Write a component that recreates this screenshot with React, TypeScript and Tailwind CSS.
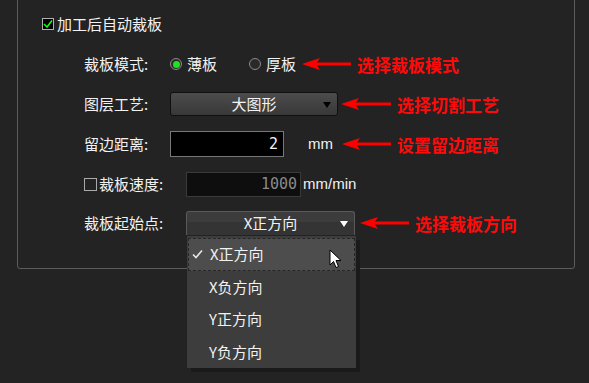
import React from 'react';

const cjk = { fontFamily: '"Microsoft YaHei", "Noto Sans CJK SC", "Liberation Sans", sans-serif' };

function RedArrow({ width = 50 }: { width?: number }) {
  return (
    <svg width={width} height="14" viewBox={`0 0 ${width} 14`} className="shrink-0">
      <polygon points={`0,7 18,1 15,5.5 ${width},5.5 ${width},8.5 15,8.5 18,13`} fill="#ff0000" />
    </svg>
  );
}

function Note({ text, ml, width }: { text: string; ml: string; width?: number }) {
  return (
    <div className={`flex items-center ${ml}`}>
      <RedArrow width={width} />
      <span className="ml-[6px] text-[17px] font-bold text-[#ff0a0a] leading-none" style={cjk}>
        {text}
      </span>
    </div>
  );
}

function Caret({ color }: { color: string }) {
  return (
    <svg className="absolute right-[6px] top-[9px]" width="8" height="6" viewBox="0 0 8 6">
      <polygon points="0,0 8,0 4,6" fill={color} />
    </svg>
  );
}

function Radio({ checked, label }: { checked?: boolean; label: string }) {
  return (
    <div className="flex items-center">
      <span className="w-[12px] h-[12px] rounded-full border border-[#8a8a8a] bg-[#2a2a2a] flex items-center justify-center">
        {checked && <span className="w-[7px] h-[7px] rounded-full bg-[#22e022]" />}
      </span>
      <span className="ml-[5px]">{label}</span>
    </div>
  );
}

const items = ['X正方向', 'X负方向', 'Y正方向', 'Y负方向'];

export default function App() {
  return (
    <div className="w-[589px] h-[383px] bg-[#232323] text-[#f2f2f2] text-[15px] overflow-hidden relative" style={cjk}>
      <div className="ml-[17px] -mt-[10px] w-[558px] h-[279px] border border-[#5c5c5c] rounded-[3px]">
        <div className="pt-[13px]">
          <div className="h-[40px] flex items-center pl-[24px]">
            <span className="w-[12px] h-[12px] border border-[#b0b0b0] bg-black flex items-center justify-center">
              <svg width="10" height="10" viewBox="0 0 10 10">
                <path d="M1 5 L4 8 L9 1.5" stroke="#10ff10" strokeWidth="1.6" fill="none" />
              </svg>
            </span>
            <span className="ml-[3px]">加工后自动裁板</span>
          </div>

          <div className="h-[40px] flex items-center pl-[66px]">
            <span className="w-[86px]">裁板模式:</span>
            <Radio checked label="薄板" />
            <div className="ml-[32px]">
              <Radio label="厚板" />
            </div>
            <Note text="选择裁板模式" ml="ml-[6px]" width={49} />
          </div>

          <div className="h-[40px] flex items-center pl-[66px]">
            <span className="w-[86px]">图层工艺:</span>
            <div className="relative w-[168px] h-[24px] rounded-[3px] border border-[#101010] bg-gradient-to-b from-[#4c4c4c] to-[#383838] flex items-center justify-center">
              <span>大图形</span>
              <Caret color="#000" />
            </div>
            <Note text="选择切割工艺" ml="ml-[3px]" width={50} />
          </div>

          <div className="h-[40px] flex items-center pl-[66px]">
            <span className="w-[86px]">留边距离:</span>
            <div className="w-[114px] h-[26px] border border-[#777] bg-black flex items-center justify-end pr-[5px]">
              <span style={{ fontFamily: '"DejaVu Sans Mono", monospace' }}>2</span>
            </div>
            <span className="ml-[24px]" style={{ fontFamily: '"Liberation Sans", sans-serif' }}>mm</span>
            <Note text="设置留边距离" ml="ml-[9px]" width={49} />
          </div>

          <div className="h-[40px] flex items-center pl-[66px]">
            <span className="w-[13px] h-[13px] border border-[#aaa] bg-transparent" />
            <span className="ml-[2px] w-[87px]">裁板速度:</span>
            <div className="w-[115px] h-[25px] border border-[#3a3a3a] bg-[#0e0e0e] flex items-center justify-end pr-[3px] text-[15px] text-[#8a8a8a]" style={{ fontFamily: '"DejaVu Sans Mono", monospace' }}>
              1000
            </div>
            <span className="ml-[2px]" style={{ fontFamily: '"Liberation Sans", sans-serif' }}>mm/min</span>
          </div>

          <div className="h-[38px] flex items-center pl-[66px]">
            <span className="w-[102px]">裁板起始点:</span>
            <div className="relative w-[169px] h-[24px] rounded-t-[3px] border border-[#5a5a5a] border-b-0 bg-[linear-gradient(#3c3c3c_0%,#3c3c3c_45%,#343434_45%,#343434_100%)] flex items-center justify-center">
              <span>X正方向</span>
              <Caret color="#fff" />
            </div>
            <Note text="选择裁板方向" ml="ml-[5px]" width={49} />
          </div>
        </div>
      </div>

      <div className="absolute left-[187px] top-[236px] w-[169px] h-[132px] bg-[#3d3d3d] shadow-[4px_4px_0_#1a1a1a] pt-[2px] px-[1px]">
        {items.map((t, i) => (
          <div
            key={t}
            className={`relative h-[32.5px] flex items-center pl-[21px] ${i === 0 ? 'bg-[#4d4d4d] border border-dashed border-[#262626]' : ''}`}
          >
            {i === 0 && (
              <svg className="absolute left-[3px] top-[10px]" width="11" height="10" viewBox="0 0 11 10">
                <path d="M1 5.5 L4 8.5 L10 1.5" stroke="#e8e8e8" strokeWidth="1.6" fill="none" />
              </svg>
            )}
            <span>{t}</span>
          </div>
        ))}
      </div>

      <svg className="absolute left-[329px] top-[249px]" width="13" height="21" viewBox="0 0 13 21">
        <path d="M1 1 L1 16 L4.5 12.5 L7 18.5 L9.5 17.5 L7 11.5 L12 11.5 Z" fill="white" stroke="black" strokeWidth="1" />
      </svg>
    </div>
  );
}
